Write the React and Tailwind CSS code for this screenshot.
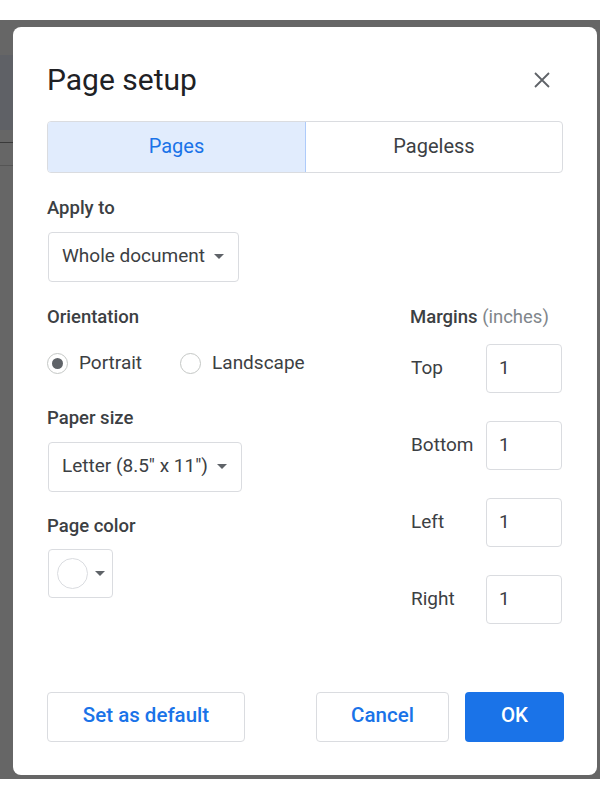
import { useState } from "react";

const font = { fontFamily: "Roboto, 'Liberation Sans', sans-serif" };

function Caret() {
    return (
        <svg width="10" height="5" viewBox="0 0 10 5" className="shrink-0">
            <path d="M0 0 L10 0 L5 5 Z" fill="#5f6368" />
        </svg>
    );
}

function Select({ value, width }) {
    return (
        <div
            className={`flex h-[50px] items-center gap-[9px] rounded-[4px] border border-[#dadce0] pl-[13px] pb-[1px] text-[19px] text-[#3c4043] ${width}`}
        >
            <span>{value}</span>
            <Caret />
        </div>
    );
}

function Radio({ checked, label }) {
    return (
        <label className="flex items-center gap-[11px]">
            <span className="flex h-[21px] w-[21px] items-center justify-center rounded-full border border-[#c4c7c5]">
                {checked && <span className="h-[11px] w-[11px] rounded-full bg-[#5f6368]" />}
            </span>
            <span className="text-[19px] text-[#3c4043]">{label}</span>
        </label>
    );
}

function MarginRow({ label }) {
    return (
        <div className="flex items-center">
            <div className="w-[75px] text-[19px] text-[#3c4043]">{label}</div>
            <div className="flex h-[49px] w-[76px] items-center rounded-[4px] border border-[#dadce0] pl-[12px] text-[19px] text-[#3c4043]">
                1
            </div>
        </div>
    );
}

export default function App() {
    const [tab, setTab] = useState("pages");

    return (
        <div className="h-[800px] w-[600px] overflow-hidden bg-white" style={font}>
            <div className="h-[20px]" />
            {/* backdrop */}
            <div className="relative h-[759px] bg-[#666666] pt-[7px] pl-[13px]">
                <div className="absolute left-0 top-[35px] h-[75px] w-[13px] bg-[#5f6166]" />
                <div className="absolute left-0 top-[122px] h-px w-[13px] bg-[#3a3a3a]" />
                <div className="absolute left-0 top-[145px] h-px w-[13px] bg-[#555]" />

                {/* dialog */}
                <div className="relative flex h-[748px] w-[584px] flex-col rounded-[8px] bg-white pl-[34px] pr-[33px]">
                    {/* header */}
                    <div className="flex items-center justify-between pt-[33px]">
                        <h1 className="text-[30px] leading-[40px] text-[#202124]">Page setup</h1>
                        <button className="mr-[10px] flex h-[24px] w-[24px] items-center justify-center">
                            <svg width="16" height="16" viewBox="0 0 16 16">
                                <path d="M1 1 L15 15 M15 1 L1 15" stroke="#5f6368" strokeWidth="1.8" />
                            </svg>
                        </button>
                    </div>

                    {/* tabs */}
                    <div className="mt-[21px] flex h-[52px] w-[516px] overflow-hidden rounded-[4px] border border-[#dadce0] pb-[3px] text-[20px]">
                        <button
                            onClick={() => setTab("pages")}
                            className={`-mb-[3px] flex w-[258px] items-center justify-center border-r pb-[3px] ${
                                tab === "pages"
                                    ? "border-[#aecbfa] bg-[#e1ecfd] text-[#1a73e8]"
                                    : "border-[#dadce0] text-[#3c4043]"
                            }`}
                        >
                            Pages
                        </button>
                        <button
                            onClick={() => setTab("pageless")}
                            className={`flex flex-1 items-center justify-center ${
                                tab === "pageless" ? "bg-[#e1ecfd] text-[#1a73e8]" : "text-[#3c4043]"
                            }`}
                        >
                            Pageless
                        </button>
                    </div>

                    {/* body */}
                    <div className="mt-[23px] text-[18.5px] font-medium leading-[24px] text-[#3c4043]">Apply to</div>
                    <div className="mt-[12px] pl-px">
                        <Select value="Whole document" width="w-[191px]" />
                    </div>

                    <div className="mt-[23px] flex">
                        {/* left column */}
                        <div className="w-[363px]">
                            <div className="text-[18.5px] font-medium leading-[24px] text-[#3c4043]">Orientation</div>
                            <div className="mt-[20px] flex items-center gap-[38px]">
                                <Radio checked label="Portrait" />
                                <Radio label="Landscape" />
                            </div>

                            <div className="mt-[28px] text-[18.5px] font-medium leading-[24px] text-[#3c4043]">Paper size</div>
                            <div className="mt-[12px] pl-px">
                                <Select value={'Letter (8.5" x 11")'} width="w-[194px]" />
                            </div>

                            <div className="mt-[22px] text-[18.5px] font-medium leading-[24px] text-[#3c4043]">Page color</div>
                            <div className="mt-[11px] pl-px">
                                <div className="flex h-[49px] w-[65px] items-center gap-[7px] rounded-[4px] border border-[#dadce0] pl-[8px]">
                                    <span className="h-[31px] w-[31px] rounded-full border border-[#dadce0] bg-white" />
                                    <Caret />
                                </div>
                            </div>
                        </div>

                        {/* right column: margins */}
                        <div className="flex-1">
                            <div className="text-[18.5px] leading-[24px] text-[#3c4043]">
                                <span className="font-medium">Margins</span>{" "}
                                <span className="text-[#80868b]">(inches)</span>
                            </div>
                            <div className="mt-[15px] flex flex-col gap-[28px] pl-px">
                                <MarginRow label="Top" />
                                <MarginRow label="Bottom" />
                                <MarginRow label="Left" />
                                <MarginRow label="Right" />
                            </div>
                        </div>
                    </div>

                    {/* footer */}
                    <div className="mt-auto mb-[33px] flex items-center text-[20.5px] font-medium">
                        <button className="h-[50px] w-[198px] rounded-[4px] border border-[#dadce0] pb-[3px] text-[#1a73e8]">
                            Set as default
                        </button>
                        <div className="flex-1" />
                        <button className="h-[50px] w-[133px] rounded-[4px] border border-[#dadce0] pb-[3px] text-[#1a73e8]">
                            Cancel
                        </button>
                        <button className="ml-[16px] h-[50px] w-[99px] rounded-[4px] bg-[#1a73e8] pb-[3px] text-white">
                            OK
                        </button>
                    </div>
                </div>
            </div>
        </div>
    );
}
